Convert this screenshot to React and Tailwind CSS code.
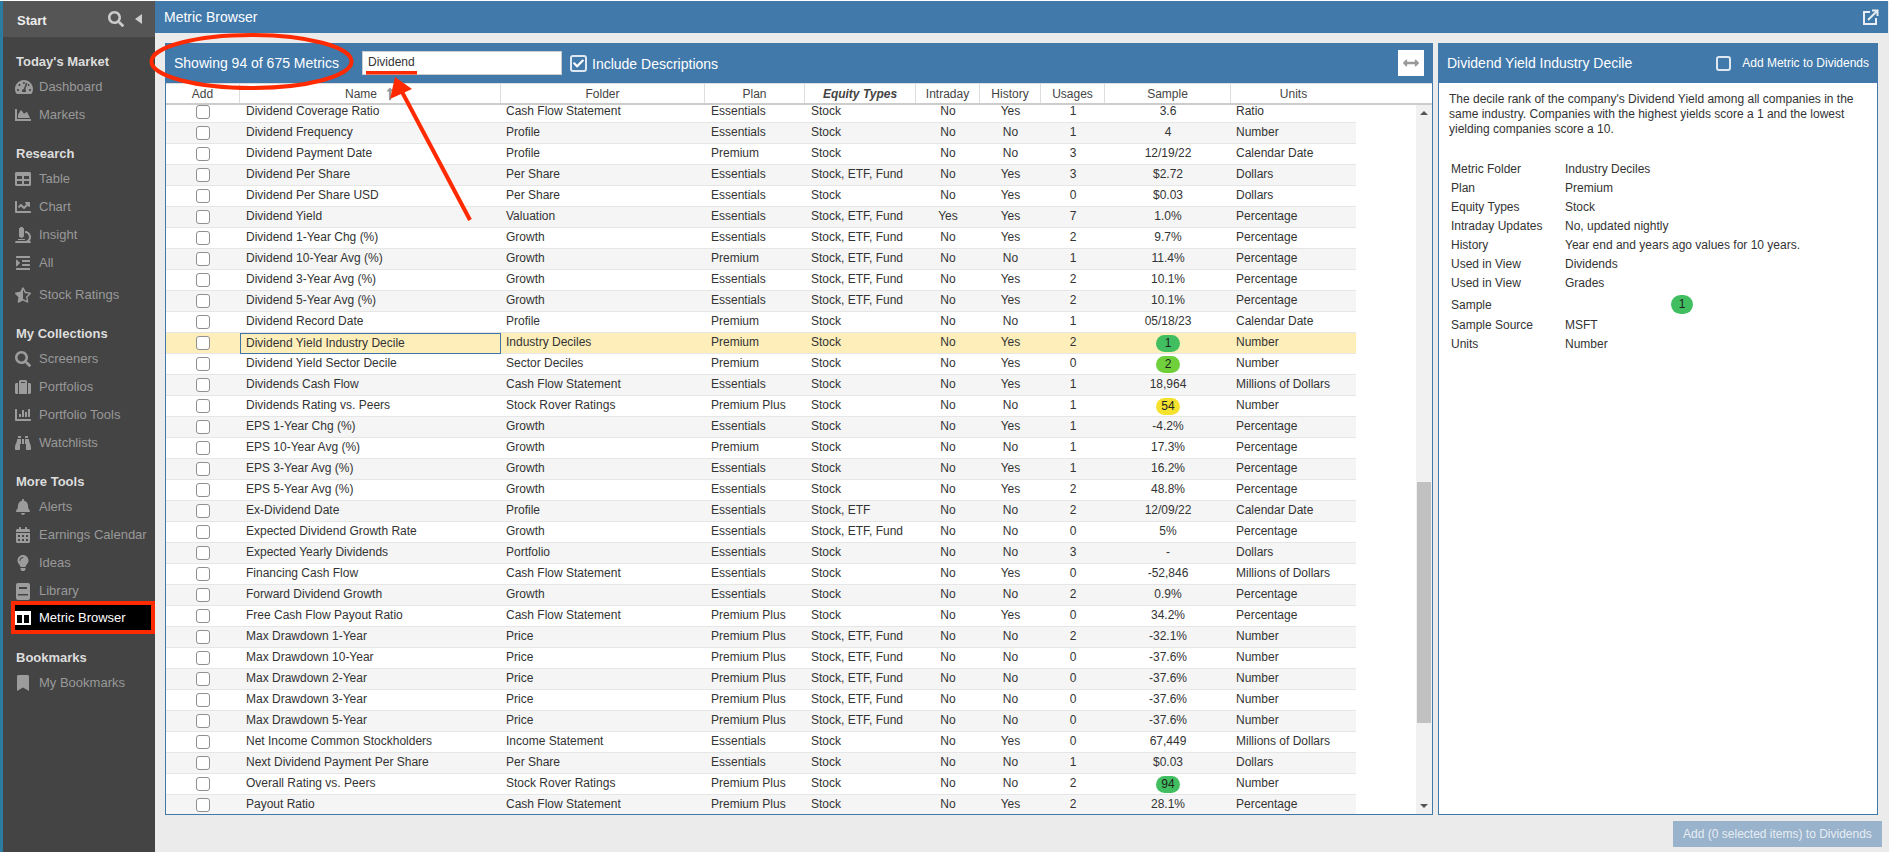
import { FaSearch, FaTachometerAlt, FaChartArea, FaTable, FaChartLine, FaMicroscope, FaIndent, FaStarHalfAlt, FaSuitcase, FaChartBar, FaBinoculars, FaBell, FaCalendarAlt, FaLightbulb, FaBookmark, FaCheck, FaArrowsAltH, FaLongArrowAltUp } from 'react-icons/fa';

const COLS = 'grid grid-cols-[74px_261px_204px_100px_111px_64px_61px_64px_126px_125px]';
const SEF = 'Stock, ETF, Fund';
const CFS = 'Cash Flow Statement';
const PCT = 'Percentage';
const NUM = 'Number';
const MOD = 'Millions of Dollars';

// name, folder, plan, types, intraday, history, usages, sample, units
const rows = [
  ['Dividend Coverage Ratio', CFS, 'Essentials', 'Stock', 'No', 'Yes', 1, '3.6', 'Ratio'],
  ['Dividend Frequency', 'Profile', 'Essentials', 'Stock', 'No', 'No', 1, '4', NUM],
  ['Dividend Payment Date', 'Profile', 'Premium', 'Stock', 'No', 'No', 3, '12/19/22', 'Calendar Date'],
  ['Dividend Per Share', 'Per Share', 'Essentials', SEF, 'No', 'Yes', 3, '$2.72', 'Dollars'],
  ['Dividend Per Share USD', 'Per Share', 'Essentials', 'Stock', 'No', 'Yes', 0, '$0.03', 'Dollars'],
  ['Dividend Yield', 'Valuation', 'Essentials', SEF, 'Yes', 'Yes', 7, '1.0%', PCT],
  ['Dividend 1-Year Chg (%)', 'Growth', 'Essentials', SEF, 'No', 'Yes', 2, '9.7%', PCT],
  ['Dividend 10-Year Avg (%)', 'Growth', 'Premium', SEF, 'No', 'No', 1, '11.4%', PCT],
  ['Dividend 3-Year Avg (%)', 'Growth', 'Essentials', SEF, 'No', 'Yes', 2, '10.1%', PCT],
  ['Dividend 5-Year Avg (%)', 'Growth', 'Essentials', SEF, 'No', 'Yes', 2, '10.1%', PCT],
  ['Dividend Record Date', 'Profile', 'Premium', 'Stock', 'No', 'No', 1, '05/18/23', 'Calendar Date'],
  ['Dividend Yield Industry Decile', 'Industry Deciles', 'Premium', 'Stock', 'No', 'Yes', 2, { v: '1', c: 'bg-[#41bf60]' }, NUM],
  ['Dividend Yield Sector Decile', 'Sector Deciles', 'Premium', 'Stock', 'No', 'Yes', 0, { v: '2', c: 'bg-[#6fd03c]' }, NUM],
  ['Dividends Cash Flow', CFS, 'Essentials', 'Stock', 'No', 'Yes', 1, '18,964', MOD],
  ['Dividends Rating vs. Peers', 'Stock Rover Ratings', 'Premium Plus', 'Stock', 'No', 'No', 1, { v: '54', c: 'bg-[#f5e22e]' }, NUM],
  ['EPS 1-Year Chg (%)', 'Growth', 'Essentials', 'Stock', 'No', 'Yes', 1, '-4.2%', PCT],
  ['EPS 10-Year Avg (%)', 'Growth', 'Premium', 'Stock', 'No', 'No', 1, '17.3%', PCT],
  ['EPS 3-Year Avg (%)', 'Growth', 'Essentials', 'Stock', 'No', 'Yes', 1, '16.2%', PCT],
  ['EPS 5-Year Avg (%)', 'Growth', 'Essentials', 'Stock', 'No', 'Yes', 2, '48.8%', PCT],
  ['Ex-Dividend Date', 'Profile', 'Essentials', 'Stock, ETF', 'No', 'No', 2, '12/09/22', 'Calendar Date'],
  ['Expected Dividend Growth Rate', 'Growth', 'Essentials', SEF, 'No', 'No', 0, '5%', PCT],
  ['Expected Yearly Dividends', 'Portfolio', 'Essentials', 'Stock', 'No', 'No', 3, '-', 'Dollars'],
  ['Financing Cash Flow', CFS, 'Essentials', 'Stock', 'No', 'Yes', 0, '-52,846', MOD],
  ['Forward Dividend Growth', 'Growth', 'Essentials', 'Stock', 'No', 'No', 2, '0.9%', PCT],
  ['Free Cash Flow Payout Ratio', CFS, 'Premium Plus', 'Stock', 'No', 'Yes', 0, '34.2%', PCT],
  ['Max Drawdown 1-Year', 'Price', 'Premium Plus', SEF, 'No', 'No', 2, '-32.1%', NUM],
  ['Max Drawdown 10-Year', 'Price', 'Premium Plus', SEF, 'No', 'No', 0, '-37.6%', NUM],
  ['Max Drawdown 2-Year', 'Price', 'Premium Plus', SEF, 'No', 'No', 0, '-37.6%', NUM],
  ['Max Drawdown 3-Year', 'Price', 'Premium Plus', SEF, 'No', 'No', 0, '-37.6%', NUM],
  ['Max Drawdown 5-Year', 'Price', 'Premium Plus', SEF, 'No', 'No', 0, '-37.6%', NUM],
  ['Net Income Common Stockholders', 'Income Statement', 'Essentials', 'Stock', 'No', 'Yes', 0, '67,449', MOD],
  ['Next Dividend Payment Per Share', 'Per Share', 'Essentials', 'Stock', 'No', 'No', 1, '$0.03', 'Dollars'],
  ['Overall Rating vs. Peers', 'Stock Rover Ratings', 'Premium Plus', 'Stock', 'No', 'No', 2, { v: '94', c: 'bg-[#41bf60]' }, NUM],
  ['Payout Ratio', CFS, 'Premium Plus', 'Stock', 'No', 'Yes', 2, '28.1%', PCT],
];

const details = [
  ['Metric Folder', 'Industry Deciles'],
  ['Plan', 'Premium'],
  ['Equity Types', 'Stock'],
  ['Intraday Updates', 'No, updated nightly'],
  ['History', 'Year end and years ago values for 10 years.'],
  ['Used in View', 'Dividends'],
  ['Used in View', 'Grades'],
];

function LibraryIcon() {
  return (
    <svg width="16" height="17" viewBox="0 0 16 17" fill="#9c9c9c">
      <path fillRule="evenodd" d="M3 0h10a2 2 0 0 1 2 2v13a2 2 0 0 1-2 2H3a2 2 0 0 1-2-2V2a2 2 0 0 1 2-2zM4 4v2h8V4H4zM3 11v1.500h10V11H3z" />
    </svg>
  );
}

function ColumnsIcon() {
  return (
    <svg width="16" height="14" viewBox="0 0 16 14" fill="#fff">
      <path fillRule="evenodd" d="M0 0h16v14H0V0zM2 4v8h5V4H2zM9 4v8h5V4H9z" />
    </svg>
  );
}

function Item({ icon: Icon, label, size = 16, className = '' }) {
  return (
    <div className={`flex items-center h-[28px] pl-[12px] text-[13px] text-[#999] ${className}`}>
      <span className="w-[24px] flex text-[#9c9c9c]"><Icon size={size} /></span>
      {label}
    </div>
  );
}

function Heading({ children }) {
  return <div className="mt-[12px] h-[24px] pt-[2px] pl-[13px] flex items-center text-[13px] font-bold text-[#ddd]">{children}</div>;
}

function Sidebar() {
  return (
    <div className="w-[152px] bg-[#444] shrink-0">
      <div className="h-[36px] bg-[#555] flex items-center pl-[14px] pr-[13px] text-[13px] font-bold text-[#eee]">
        <span className="flex-1 pt-[4px]">Start</span>
        <FaSearch size={16} className="text-[#ccc] mr-[11px]" />
        <span className="w-0 h-0 border-y-[5px] border-y-transparent border-r-[7px] border-r-[#ccc]" />
      </div>
      <Heading>Today's Market</Heading>
      <Item icon={FaTachometerAlt} label="Dashboard" size={18} />
      <Item icon={FaChartArea} label="Markets" />
      <Heading>Research</Heading>
      <Item icon={FaTable} label="Table" />
      <Item icon={FaChartLine} label="Chart" />
      <Item icon={FaMicroscope} label="Insight" />
      <Item icon={FaIndent} label="All" />
      <Item icon={FaStarHalfAlt} label="Stock Ratings" className="mt-[4px]" />
      <Heading>My Collections</Heading>
      <Item icon={FaSearch} label="Screeners" />
      <Item icon={FaSuitcase} label="Portfolios" />
      <Item icon={FaChartBar} label="Portfolio Tools" />
      <Item icon={FaBinoculars} label="Watchlists" />
      <Heading>More Tools</Heading>
      <Item icon={FaBell} label="Alerts" />
      <Item icon={FaCalendarAlt} label="Earnings Calendar" />
      <Item icon={FaLightbulb} label="Ideas" />
      <Item icon={LibraryIcon} label="Library" />
      <div className="-mt-[4px] -mb-[1px] ml-[8px] h-[33px] border-4 border-[#ff2a00] bg-black flex items-center text-[13px] text-white">
        <span className="w-[24px] flex"><ColumnsIcon /></span>
        Metric Browser
      </div>
      <Heading>Bookmarks</Heading>
      <Item icon={FaBookmark} label="My Bookmarks" />
    </div>
  );
}

function Box() {
  return <span className="block w-[14px] h-[14px] mx-auto mt-[3px] rounded-[3px] border border-[#8f8f8f] bg-white" />;
}

function Sample({ value }) {
  if (typeof value === 'string') return value;
  return <span className={`block mx-auto mt-[2px] w-[24px] h-[17px] leading-[17px] rounded-full text-[#222] ${value.c}`}>{value.v}</span>;
}

function Row({ row, index }) {
  const selected = row[0] === 'Dividend Yield Industry Decile';
  const bg = selected ? 'bg-[#fdeeba]' : index % 2 ? 'bg-[#f5f5f5]' : 'bg-white';
  return (
    <div className={`${COLS} ${bg} w-[1190px] h-[21px] leading-[19px] border-b border-[#e6e6e6] text-[#333] text-[12px] shrink-0`}>
      <div><Box /></div>
      <div className={selected ? 'pl-[5px] border border-[#3f74a6] -mb-px leading-[18px]' : 'pl-[6px]'}>{row[0]}</div>
      <div className="pl-[5px]">{row[1]}</div>
      <div className="pl-[6px]">{row[2]}</div>
      <div className="pl-[6px]">{row[3]}</div>
      <div className="text-center">{row[4]}</div>
      <div className="text-center">{row[5]}</div>
      <div className="text-center">{row[6]}</div>
      <div className="text-center"><Sample value={row[7]} /></div>
      <div className="pl-[5px]">{row[8]}</div>
    </div>
  );
}

function GridHeader() {
  const cell = 'flex items-center justify-center border-r border-[#ddd]';
  return (
    <div className="h-[22px] bg-white border-t border-[#ddd] border-b-2 border-b-[#ccc] text-[12px] text-[#444] shrink-0">
      <div className={`${COLS} h-full`}>
        <div className={cell}>Add</div>
        <div className={`${cell} pl-[2px]`}>Name<FaLongArrowAltUp size={14} className="ml-[6px] text-[#999]" /></div>
        <div className={cell}>Folder</div>
        <div className={cell}>Plan</div>
        <div className={`${cell} font-bold italic`}>Equity Types</div>
        <div className={cell}>Intraday</div>
        <div className={cell}>History</div>
        <div className={cell}>Usages</div>
        <div className={cell}>Sample</div>
        <div className="flex items-center justify-center">Units</div>
      </div>
    </div>
  );
}

function MetricGrid() {
  return (
    <div className="w-[1268px] flex flex-col bg-white border border-t-0 border-[#4179ab]">
      <div className="h-[40px] -mx-px bg-[#4179ab] flex items-center text-white text-[14px] shrink-0">
        <span className="ml-[9px] w-[188px]">Showing 94 of 675 Metrics</span>
        <span className="w-[200px] h-[24px] leading-[20px] pl-[5px] bg-white text-[#333] text-[12px] border border-[#ccc]">Dividend</span>
        <span className="ml-[8px] w-[17px] h-[17px] rounded-[3px] border-2 border-[#dfe8f0] flex items-center justify-center"><FaCheck size={11} className="text-white" /></span>
        <span className="ml-[5px] flex-1 pt-[2px]">Include Descriptions</span>
        <span className="mr-[9px] w-[26px] h-[26px] bg-white flex items-center justify-center text-[#999]"><FaArrowsAltH size={16} /></span>
      </div>
      <GridHeader />
      <div className="flex flex-1 min-h-0">
        <div className="flex-1 overflow-hidden flex flex-col">
          <div className="-mt-[3px]">
            {rows.map((r, i) => <Row key={r[0]} row={r} index={i} />)}
          </div>
        </div>
        <div className="w-[16px] bg-[#f1f1f1] flex flex-col items-center relative">
          <span className="absolute top-[6px] w-0 h-0 border-x-[4px] border-x-transparent border-b-[4px] border-b-[#555]" />
          <div className="mt-[377px] h-[241px] w-[14px] bg-[#c1c1c1]" />
          <span className="absolute bottom-[6px] w-0 h-0 border-x-[4px] border-x-transparent border-t-[4px] border-t-[#555]" />
        </div>
      </div>
    </div>
  );
}

function DetailPanel() {
  return (
    <div className="w-[440px] flex flex-col bg-white border border-t-0 border-[#4179ab] text-[12px] text-[#333]">
      <div className="h-[40px] -mx-px bg-[#4179ab] flex items-center text-white shrink-0">
        <span className="ml-[9px] flex-1 text-[14px]">Dividend Yield Industry Decile</span>
        <span className="w-[15px] h-[15px] rounded-[3px] border-2 border-[#dfe8f0]" />
        <span className="ml-[11px] mr-[9px]">Add Metric to Dividends</span>
      </div>
      <p className="mt-[9px] px-[10px] leading-[15px]">
        The decile rank of the company's Dividend Yield among all companies in the same industry. Companies with the highest yields score a 1 and the lowest yielding companies score a 10.
      </p>
      <div className="mt-[23px] pl-[12px]">
        {details.map((d, i) => (
          <div key={i} className="grid grid-cols-[114px_1fr] h-[19px] leading-[19px]"><span>{d[0]}</span><span>{d[1]}</span></div>
        ))}
        <div className="grid grid-cols-[114px_1fr] h-[23px] items-center">
          <span>Sample</span>
          <span className="ml-[106px] w-[22px] h-[19px] leading-[19px] text-center rounded-full bg-[#41bf60] text-[#222]">1</span>
        </div>
        <div className="grid grid-cols-[114px_1fr] h-[19px] leading-[19px]"><span>Sample Source</span><span>MSFT</span></div>
        <div className="grid grid-cols-[114px_1fr] h-[19px] leading-[19px]"><span>Units</span><span>Number</span></div>
      </div>
    </div>
  );
}

export default function App() {
  return (
    <div className="relative w-[1889px] h-[852px] overflow-hidden bg-white pt-px font-['Liberation_Sans',Arial,sans-serif]">
      <div className="flex h-[851px]">
        <div className="w-[3px] bg-[#2a7da0] shrink-0" />
        <Sidebar />
        <div className="flex-1 flex flex-col bg-[#ebebeb]">
          <div className="h-[32px] mr-px bg-[#4179ab] flex items-center pl-[9px] pr-[9px] text-white text-[14px] shrink-0">
            <span className="flex-1">Metric Browser</span>
            <svg width="17" height="17" viewBox="0 0 17 17" fill="none" stroke="#e8eef4" strokeWidth="2">
              <path d="M8 3H2v12h12V9" />
              <path d="M6 11L15 2" />
              <path d="M10 1.500h5.500V7" />
            </svg>
          </div>
          <div className="mt-[10px] ml-[10px] flex gap-[5px] h-[772px]">
            <MetricGrid />
            <DetailPanel />
          </div>
          <div className="flex justify-end pr-[7px] mt-[6px]">
            <button className="w-[209px] h-[26px] bg-[#99b3cc] text-[#e6edf3] text-[12px]">Add (0 selected items) to Dividends</button>
          </div>
        </div>
      </div>
      <svg className="absolute top-0 left-0 pointer-events-none" width="1889" height="852">
        <ellipse cx="251.5" cy="61.5" rx="100" ry="26.5" fill="none" stroke="#ff2a00" strokeWidth="4" />
        <rect x="366" y="71" width="51" height="3.5" fill="#ff2a00" />
        <line x1="470" y1="220" x2="401" y2="90" stroke="#ff2a00" strokeWidth="4" />
        <polygon points="395,77 412,89 390,99" fill="#ff2a00" />
      </svg>
    </div>
  );
}
